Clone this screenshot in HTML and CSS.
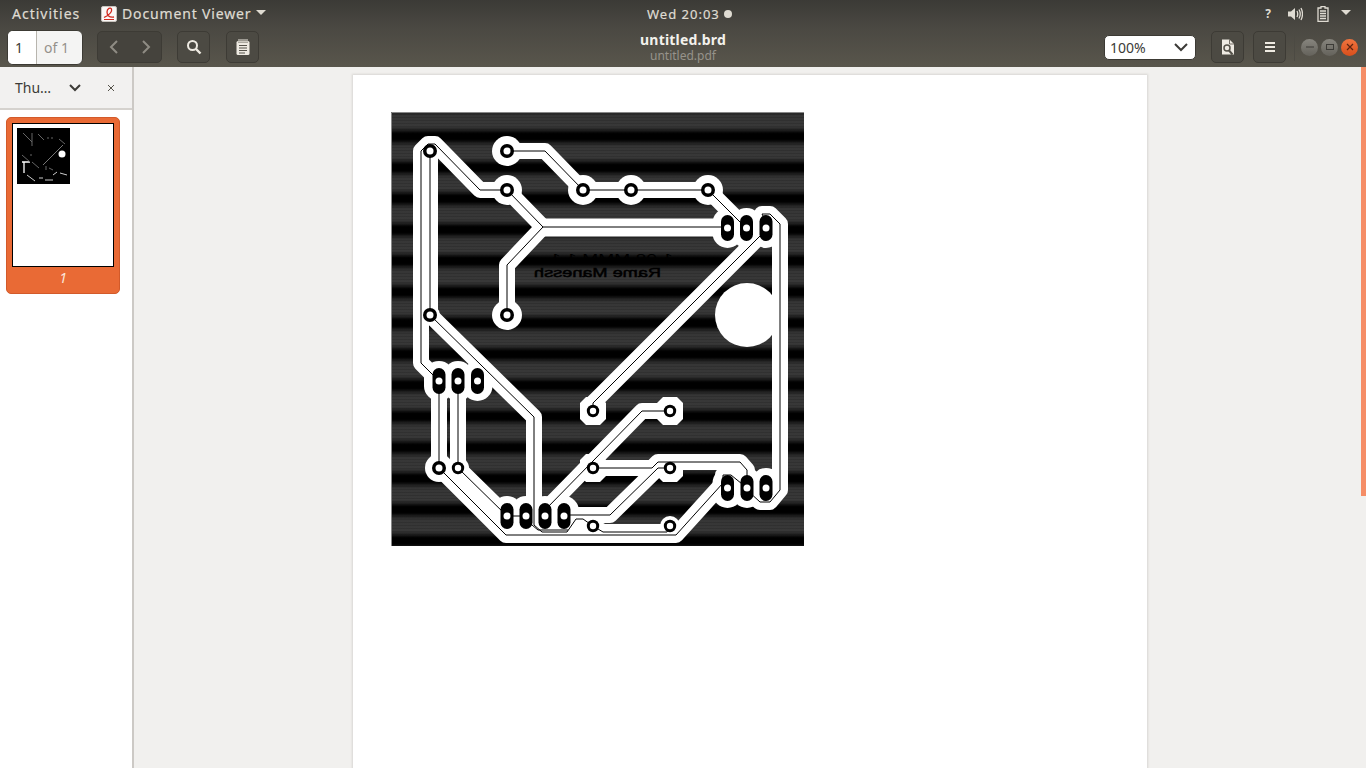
FILE: index.html
```html
<!DOCTYPE html>
<html lang="en">
<head>
    <meta charset="UTF-8">
    <title>Document Viewer</title>
    <link rel="stylesheet" href="styles.css">
</head>
<body>
    <div class="topbar">
        <div class="top-left">
            <span class="activities">Activities</span>
            <svg class="app-icon" width="16" height="16" viewBox="0 0 16 16">
                <rect x="0.5" y="0.5" width="15" height="15" rx="1.5" fill="#fbf8f6" stroke="#c9c4bf"/>
                <path d="M3 11.500 C7 9.500 11.500 6 10.500 3 C9.500 1 6 2.500 6 6 C6 9 8 12 13 11" fill="none" stroke="#d2281e" stroke-width="1.300"/>
                <path d="M3 13.500 H13" stroke="#d2281e" stroke-width="1"/>
            </svg>
            <span class="app-name">Document Viewer</span>
            <span class="caret"></span>
        </div>
        <div class="clock">Wed 20:03<span class="clock-dot"></span></div>
        <div class="top-right">
            <span class="help">?</span>
            <svg width="16" height="16" viewBox="0 0 16 16" class="tray-vol">
                <path d="M1 5.500 H4 L8 2 V14 L4 10.500 H1 Z" fill="#dfdbd2"/>
                <path d="M10 5 Q11.500 8 10 11 M12 3.500 Q14.500 8 12 12.500 M14 2 Q17 8 14 14" fill="none" stroke="#dfdbd2" stroke-width="1.300"/>
            </svg>
            <svg width="12" height="16" viewBox="0 0 12 16" class="tray-bat">
                <path d="M4 0.500 H8 V2 H11 V15.500 H1 V2 H4 Z" fill="none" stroke="#dfdbd2" stroke-width="1.300"/>
                <path d="M3 5 H9 M3 7.500 H9 M3 10 H9 M3 12.500 H9" stroke="#dfdbd2" stroke-width="1.500"/>
            </svg>
            <span class="caret tray-caret"></span>
        </div>
    </div>

    <div class="headerbar">
        <div class="head-left">
            <div class="page-entry">
                <span class="page-num">1</span>
                <span class="page-of">of 1</span>
            </div>
            <div class="btn nav-group">
                <svg width="12" height="14" viewBox="0 0 12 14"><path d="M9 1 L3 7 L9 13" fill="none" stroke="#8f8c84" stroke-width="2"/></svg>
                <svg width="12" height="14" viewBox="0 0 12 14"><path d="M3 1 L9 7 L3 13" fill="none" stroke="#8f8c84" stroke-width="2"/></svg>
            </div>
            <div class="btn btn-search">
                <svg width="16" height="16" viewBox="0 0 16 16"><circle cx="6.500" cy="6.500" r="4.500" fill="none" stroke="#eeeae2" stroke-width="2"/><path d="M10 10 L14.500 14.500" stroke="#eeeae2" stroke-width="2.400"/></svg>
            </div>
            <div class="btn btn-notes">
                <svg width="14" height="16" viewBox="0 0 14 16">
                    <rect x="0.500" y="2" width="13" height="14" rx="1.500" fill="#eeeae2"/>
                    <path d="M3 0 V2 M5 0 V2 M7 0 V2 M9 0 V2 M11 0 V2" stroke="#eeeae2"/>
                    <path d="M3 2.500 V4 M5 2.500 V4 M7 2.500 V4 M9 2.500 V4 M11 2.500 V4" stroke="#6b685f"/>
                    <path d="M3 6.500 H11 M3 9 H11 M3 11.500 H11 M3 14 H9" stroke="#55524a"/>
                </svg>
            </div>
        </div>
        <div class="title-box">
            <div class="title">untitled.brd</div>
            <div class="subtitle">untitled.pdf</div>
        </div>
        <div class="head-right">
            <div class="zoom-combo">
                <span>100%</span>
                <svg width="14" height="9" viewBox="0 0 14 9"><path d="M1 1 L7 7 L13 1" fill="none" stroke="#3c3b37" stroke-width="2"/></svg>
            </div>
            <div class="btn btn-doc">
                <svg width="14" height="16" viewBox="0 0 14 16">
                    <path d="M1 0.500 H8.500 L13 5 V15.500 H1 Z" fill="#eeeae2"/>
                    <path d="M8.500 0.500 V5 H13" fill="none" stroke="#55524a" stroke-width="0.800"/>
                    <circle cx="6" cy="9" r="3" fill="none" stroke="#55524a" stroke-width="1.500"/>
                    <path d="M8 11.500 L11.500 15.500" stroke="#55524a" stroke-width="2"/>
                </svg>
            </div>
            <div class="btn btn-menu">
                <svg width="12" height="12" viewBox="0 0 12 12"><path d="M1 2 H11 M1 6 H11 M1 10 H11" stroke="#eeeae2" stroke-width="2"/></svg>
            </div>
            <div class="head-sep"></div>
            <div class="win-controls">
                <span class="win-btn">
                    <svg width="10" height="10" viewBox="0 0 10 10"><path d="M1 5 H9" stroke="#3c3b37"/></svg>
                </span>
                <span class="win-btn">
                    <svg width="10" height="10" viewBox="0 0 10 10"><rect x="1.500" y="2.500" width="7" height="5" fill="none" stroke="#3c3b37"/></svg>
                </span>
                <span class="win-btn win-close">
                    <svg width="10" height="10" viewBox="0 0 10 10"><path d="M2 2 L8 8 M8 2 L2 8" stroke="#5e2410" stroke-width="1.200"/></svg>
                </span>
            </div>
        </div>
    </div>

    <div class="main">
        <div class="sidebar">
            <div class="side-head">
                <span class="side-label">Thu…</span>
                <svg width="12" height="8" viewBox="0 0 12 8"><path d="M1 1 L6 6 L11 1" fill="none" stroke="#3c3b37" stroke-width="2"/></svg>
                <svg class="side-close" width="8" height="8" viewBox="0 0 8 8"><path d="M1 1 L7 7 M7 1 L1 7" stroke="#55524a"/></svg>
            </div>
            <div class="thumb-card">
                <div class="thumb-page">
                    <svg class="thumb-art" width="53" height="56" viewBox="0 0 53 56">
                        <rect width="53" height="56" fill="#000"/>
                        <circle cx="45" cy="26" r="3.500" fill="#fff"/>
                        <path d="M7 34 V45 M5 34 H13" stroke="#fff" stroke-width="1.300"/>
                        <path d="M26 37 L46 17" stroke="#777" stroke-width="1"/>
                        <path d="M10 47 L18 53 M22 50 H26 M28 52 H36 M36 47 L40 44 M43 45 L50 47" stroke="#ccc" stroke-width="1"/>
                        <path d="M6 5 L15 14 M15 5 V18 M21 6 L27 12 M31 9 V11 M35 9 V11 M42 11 L48 16 M5 27 L13 34 M14 26 V28 M15 34 L22 40 M29 38 V42 M32 40 L36 42" stroke="#666" stroke-width="1"/>
                    </svg>
                </div>
                <div class="thumb-label">1</div>
            </div>
        </div>
        <div class="content">
            <div class="pdf-page">
                <svg class="board" width="413" height="434" viewBox="391 112 413 434">
                    <defs>
                        <linearGradient id="bandFade" x1="0" y1="0" x2="0" y2="1">
                            <stop offset="0" stop-color="#000"/>
                            <stop offset="0.1" stop-color="#000"/>
                            <stop offset="0.2" stop-color="#1e1e1e"/>
                            <stop offset="0.32" stop-color="#363636"/>
                            <stop offset="0.68" stop-color="#383838"/>
                            <stop offset="0.8" stop-color="#1e1e1e"/>
                            <stop offset="0.9" stop-color="#000"/>
                            <stop offset="1" stop-color="#000"/>
                        </linearGradient>
                        <pattern id="bands" width="413" height="31.100" patternUnits="userSpaceOnUse" patternTransform="translate(0 136.500)">
                            <rect width="413" height="31.100" fill="url(#bandFade)"/>
                        </pattern>
                        <pattern id="scan" width="10" height="3" patternUnits="userSpaceOnUse">
                            <rect width="10" height="1" fill="#000" fill-opacity="0.12"/>
                        </pattern>
                        <g id="tracks">
                            <polyline points="439,381 421,363 421,151 428,144 435,144 480,190 507,190"/>
                            <polyline points="430,151 430,315 534,417 534,525 542,532 567,532 576,519 583,519 593,526"/>
                            <polyline points="507,190 543,227 507,265 507,315"/>
                            <polyline points="543,227 727,227"/>
                            <polyline points="507,151 545,151 583,190 708,190 746,228"/>
                            <polyline points="593,411 593,403 766,230"/>
                            <polyline points="593,468 652,468 658,462 740,462 747,470 747,490 760,502 770,502 780,490 780,224 770,214 762,214 766,222"/>
                            <polyline points="439,381 439,468 506,535 676,535 723,483 723,475 731,475 747,488"/>
                            <polyline points="458,381 458,468 507,516 526,516"/>
                            <polyline points="670,411 642,411 545,510 545,516"/>
                            <polyline points="670,468 658,468 610,515 564,515"/>
                            <polyline points="593,526 603,532 667,532 670,526"/>
                            <polyline points="526,520 538,530 568,530"/>
                        </g>
                        <g id="oval">
                            <rect x="-6.500" y="-13" width="13" height="26" rx="6.500" fill="#000"/>
                            <circle r="3.500" fill="#fff"/>
                        </g>
                        <g id="ovalHalo">
                            <rect x="-15" y="-20" width="30" height="40" rx="15" fill="#fff"/>
                        </g>
                        <g id="octa">
                            <polygon points="-7,-14 7,-14 13,-8 13,8 7,14 -7,14 -13,8 -13,-8" fill="#fff"/>
                        </g>
                        <g id="ring">
                            <circle r="7" fill="#000"/>
                            <circle r="3.500" fill="#fff"/>
                        </g>
                        <g id="ringSmall">
                            <circle r="6.200" fill="#000"/>
                            <circle r="3.200" fill="#fff"/>
                        </g>
                    </defs>
                    <rect x="391" y="112" width="413" height="434" fill="url(#bands)"/>
                    <rect x="391" y="112" width="413" height="434" fill="url(#scan)"/>
                    <path d="M391.500 546 V112.500 H804" class="board-edge"/>

                    <text class="mirror-text" transform="translate(673 263) scale(-1 1)" textLength="123" lengthAdjust="spacingAndGlyphs">1 08 MMM 1 1</text>
                    <text class="mirror-text mirror-bold" transform="translate(661 277) scale(-1 1)" textLength="127" lengthAdjust="spacingAndGlyphs">Rame Manessh</text>

                    <use href="#tracks" class="track-fill"/>
                    <rect x="543" y="218.500" width="185" height="18" fill="#fff"/>
                    <circle cx="747" cy="315" r="32" fill="#fff"/>
                    <g fill="#fff">
                        <circle cx="507" cy="151" r="15"/>
                        <circle cx="507" cy="190" r="15"/>
                        <circle cx="583" cy="190" r="15"/>
                        <circle cx="631" cy="190" r="15"/>
                        <circle cx="708" cy="190" r="15"/>
                        <circle cx="507" cy="315" r="15"/>
                        <circle cx="430" cy="315" r="10"/>
                        <circle cx="430" cy="151" r="10"/>
                        <circle cx="439" cy="468" r="14"/>
                        <circle cx="458" cy="468" r="11"/>
                        <circle cx="593" cy="526" r="10"/>
                        <circle cx="670" cy="526" r="10"/>
                    </g>
                    <use href="#octa" x="593" y="411"/>
                    <use href="#octa" x="670" y="411"/>
                    <use href="#octa" x="593" y="468"/>
                    <use href="#octa" x="670" y="468"/>
                    <use href="#ovalHalo" x="727.500" y="228"/>
                    <use href="#ovalHalo" x="746.500" y="228"/>
                    <use href="#ovalHalo" x="766" y="228"/>
                    <use href="#ovalHalo" x="439" y="381"/>
                    <use href="#ovalHalo" x="458" y="381"/>
                    <use href="#ovalHalo" x="477.500" y="381"/>
                    <use href="#ovalHalo" x="507" y="516"/>
                    <use href="#ovalHalo" x="526" y="516"/>
                    <use href="#ovalHalo" x="545" y="516"/>
                    <use href="#ovalHalo" x="564" y="516"/>
                    <use href="#ovalHalo" x="727.500" y="488"/>
                    <use href="#ovalHalo" x="747" y="488"/>
                    <use href="#ovalHalo" x="766" y="488"/>

                    <use href="#tracks" class="track-line"/>

                    <use href="#ring" x="430" y="151"/>
                    <use href="#ring" x="507" y="151"/>
                    <use href="#ring" x="507" y="190"/>
                    <use href="#ring" x="583" y="190"/>
                    <use href="#ring" x="631" y="190"/>
                    <use href="#ring" x="708" y="190"/>
                    <use href="#ring" x="507" y="315"/>
                    <use href="#ring" x="430" y="315"/>
                    <use href="#ring" x="439" y="468"/>
                    <use href="#ringSmall" x="458" y="468"/>
                    <use href="#ringSmall" x="593" y="411"/>
                    <use href="#ringSmall" x="670" y="411"/>
                    <use href="#ringSmall" x="593" y="468"/>
                    <use href="#ringSmall" x="670" y="468"/>
                    <use href="#ringSmall" x="593" y="526"/>
                    <use href="#ringSmall" x="670" y="526"/>

                    <use href="#oval" x="727.500" y="228"/>
                    <use href="#oval" x="746.500" y="228"/>
                    <use href="#oval" x="766" y="228"/>
                    <use href="#oval" x="439" y="381"/>
                    <use href="#oval" x="458" y="381"/>
                    <use href="#oval" x="477.500" y="381"/>
                    <use href="#oval" x="507" y="516"/>
                    <use href="#oval" x="526" y="516"/>
                    <use href="#oval" x="545" y="516"/>
                    <use href="#oval" x="564" y="516"/>
                    <use href="#oval" x="727.500" y="488"/>
                    <use href="#oval" x="747" y="488"/>
                    <use href="#oval" x="766" y="488"/>
                </svg>
            </div>
            <div class="scroll-thumb"></div>
        </div>
    </div>
</body>
</html>
```

FILE: styles.css
```css
html, body {
    margin: 0;
    height: 768px;
    overflow: hidden;
}
body {
    display: flex;
    flex-direction: column;
    font-family: "Noto Sans", "Open Sans", sans-serif;
    background-color: #f1f0ee;
}
svg {
    display: block;
    flex: none;
}
.topbar {
    height: 27px;
    flex: none;
    display: flex;
    align-items: center;
    position: relative;
    background: linear-gradient(#3b3a36, #4a4842);
    color: #dfdbd2;
    font-size: 14px;
}
.top-left {
    display: flex;
    align-items: center;
}
.activities {
    margin-left: 12px;
    width: 89px;
    letter-spacing: 1px;
    -webkit-text-stroke: 0.2px #dfdbd2;
}
.app-name {
    margin-left: 5px;
    letter-spacing: 0.85px;
    -webkit-text-stroke: 0.2px #dfdbd2;
}
.caret {
    width: 0;
    height: 0;
    margin-left: 5px;
    margin-top: -2px;
    border-left: 5px solid transparent;
    border-right: 5px solid transparent;
    border-top: 5px solid #dfdbd2;
}
.clock {
    position: absolute;
    left: 647px;
    top: 5px;
    font-size: 13px;
    letter-spacing: 1px;
    -webkit-text-stroke: 0.2px #dfdbd2;
    display: flex;
    align-items: center;
}
.clock-dot {
    width: 8px;
    height: 8px;
    margin-left: 4px;
    border-radius: 50%;
    background-color: #dfdbd2;
}
.top-right {
    margin-left: auto;
    display: flex;
    align-items: center;
}
.help {
    font-size: 12px;
    font-weight: bold;
    margin-right: 16px;
}
.tray-bat {
    margin-left: 14px;
}
.tray-caret {
    margin-left: 12px;
    margin-right: 15px;
}

.headerbar {
    height: 40px;
    flex: none;
    display: grid;
    grid-template-columns: 1fr auto 1fr;
    align-items: center;
    background: linear-gradient(#4a4842, #59564c);
}
.head-left, .head-right {
    display: flex;
    align-items: center;
}
.head-left {
    padding-left: 7px;
}
.head-right {
    justify-content: flex-end;
}
.page-entry {
    width: 76px;
    height: 35px;
    display: flex;
    box-sizing: border-box;
    border-radius: 6px;
    overflow: hidden;
    border: 1px solid #3c3a34;
    background-color: #f4f4f3;
    font-size: 14px;
    line-height: 33px;
}
.page-num {
    width: 29px;
    box-sizing: border-box;
    padding-left: 7px;
    background-color: #fff;
    border-right: 1px solid #b8b5ae;
    color: #3c3b37;
}
.page-of {
    padding-left: 7px;
    color: #94918b;
}
.btn {
    height: 32px;
    box-sizing: border-box;
    display: flex;
    align-items: center;
    justify-content: center;
    border: 1px solid #3d3b35;
    border-radius: 5px;
    background-color: #4c4a43;
}
.nav-group {
    width: 65px;
    margin-left: 14px;
    gap: 20px;
    background-color: #45433d;
}
.btn-search {
    width: 33px;
    margin-left: 15px;
}
.btn-notes {
    width: 33px;
    margin-left: 16px;
}
.title-box {
    text-align: center;
    line-height: 16px;
    padding-top: 1px;
}
.title {
    font-size: 14px;
    font-weight: bold;
    letter-spacing: 0.2px;
    color: #f3f1ec;
}
.subtitle {
    font-size: 12px;
    color: #96938b;
}
.zoom-combo {
    width: 92px;
    height: 25px;
    box-sizing: border-box;
    padding: 0 7px 0 5px;
    display: flex;
    align-items: center;
    justify-content: space-between;
    background-color: #fff;
    border: 1px solid #3c3a34;
    border-radius: 5px;
    font-size: 14px;
    color: #3c3b37;
}
.btn-doc {
    width: 33px;
    margin-left: 15px;
}
.btn-menu {
    width: 33px;
    margin-left: 9px;
}
.head-sep {
    width: 1px;
    height: 28px;
    margin-left: 8px;
    background-color: #4c4a43;
}
.win-controls {
    display: flex;
    gap: 3px;
    margin-left: 6px;
    margin-right: 8px;
}
.win-btn {
    width: 17px;
    height: 17px;
    border-radius: 50%;
    display: flex;
    align-items: center;
    justify-content: center;
    background: linear-gradient(#87857e, #64625b);
}
.win-close {
    background: linear-gradient(#f0743f, #d94f1c);
}

.main {
    flex: 1;
    display: flex;
    min-height: 0;
}
.sidebar {
    width: 134px;
    flex: none;
    box-sizing: border-box;
    background-color: #fff;
    border-right: 2px solid #ccc9c5;
}
.side-head {
    height: 43px;
    box-sizing: border-box;
    display: flex;
    align-items: center;
    padding-left: 15px;
    background-color: #f2f1f0;
    border-bottom: 2px solid #d5d2ce;
    font-size: 14px;
    color: #3c3b37;
}
.side-label {
    width: 54px;
}
.side-close {
    margin-left: 26px;
}
.thumb-card {
    width: 114px;
    height: 177px;
    box-sizing: border-box;
    margin: 7px 0 0 6px;
    padding: 5px 5px 0;
    border-radius: 5px;
    background-color: #e96a35;
    border: 1px solid #d25a2a;
}
.thumb-page {
    height: 144px;
    box-sizing: border-box;
    padding: 4px;
    background-color: #fff;
    border: 1px solid #000;
}
.thumb-label {
    text-align: center;
    margin-top: 1px;
    font-size: 14px;
    font-style: italic;
    color: #fbe6da;
}
.content {
    flex: 1;
    position: relative;
    overflow: hidden;
    display: flex;
    justify-content: center;
}
.pdf-page {
    width: 794px;
    height: 900px;
    margin-top: 8px;
    flex: none;
    box-sizing: border-box;
    padding: 37px 0 0 38px;
    background-color: #fff;
    box-shadow: 0 0 2px 1px #d8d6d3;
}
.scroll-thumb {
    position: absolute;
    right: 0;
    top: 0;
    width: 5px;
    height: 429px;
    background-color: #f58d66;
}

.board-edge {
    fill: none;
    stroke: #888;
}
.mirror-text {
    font-family: "Liberation Sans", sans-serif;
    font-size: 13px;
    fill: #000;
}
.mirror-bold {
    stroke: #000;
    stroke-width: 0.5;
}
.track-fill {
    fill: none;
    stroke: #fff;
    stroke-width: 16;
    stroke-linejoin: round;
}
.track-line {
    fill: none;
    stroke: #000;
    stroke-width: 1;
}
```
